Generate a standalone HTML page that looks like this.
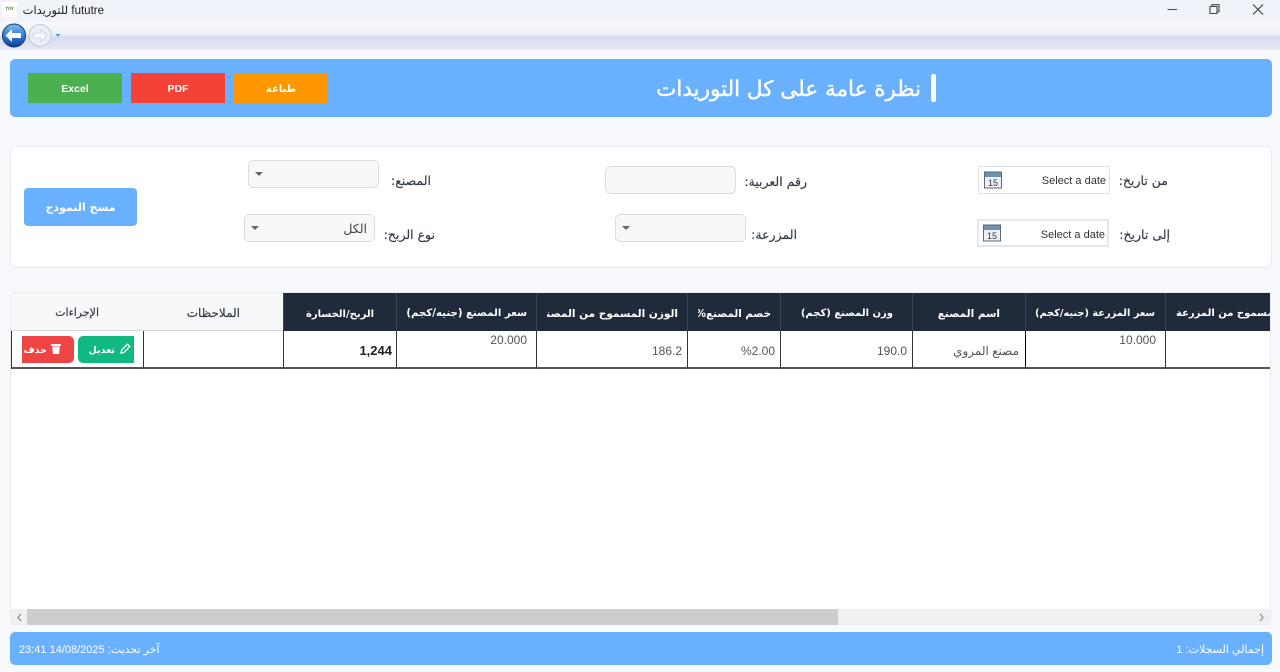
<!DOCTYPE html>
<html lang="ar">
<head>
<meta charset="utf-8">
<title>fututre للتوريدات</title>
<style>
*{box-sizing:border-box}
html,body{margin:0;padding:0;width:1280px;height:672px;overflow:hidden;background:#f7f9fc;font-family:"DejaVu Sans","Liberation Sans",sans-serif;color:#2b2f36}
.a{position:absolute}
.t{position:absolute;white-space:nowrap;direction:rtl;line-height:16px}
.lbl{font-size:12.5px;color:#333a44;height:16px;-webkit-text-stroke:.15px #333a44}
.btn{position:absolute;top:73px;width:94px;height:30px;color:#fff;font-weight:bold;font-size:10px;line-height:33px;text-align:center}
.sel{position:absolute;width:131px;height:28px;background:#f6f8fa;border:1px solid #d9dde2;border-radius:5px}
.sel:after{content:"";position:absolute;left:6px;top:11px;border-left:4px solid transparent;border-right:4px solid transparent;border-top:4px solid #666}
.date{position:absolute;width:132px;height:28px;background:#fff;border:1px solid #dde0e6;font:11px "Liberation Sans",sans-serif;color:#333;line-height:29px;text-align:right;padding-right:3px}
.date svg{position:absolute;left:5px;top:4px}
.h{position:absolute;top:293px;height:38px;background:#1f2a3b;border-left:1px solid #3a4557;overflow:hidden}
.h i{position:absolute;top:0;bottom:0;left:10px;right:9px;overflow:hidden;font-style:normal;display:block}
.h span{position:absolute;white-space:nowrap;direction:rtl;font-size:10.5px;line-height:14px;top:14px;color:#fff;font-weight:bold}
.hl{position:absolute;top:293px;height:38px;background:#f6f8fa;overflow:hidden;border-bottom:1px solid #d3d6da}
.hl span{position:absolute;white-space:nowrap;direction:rtl;line-height:14px;top:13px;color:#333a44;font-size:12px;-webkit-text-stroke:.15px #333a44}
.c{position:absolute;top:331px;height:38px;background:#fff;border-left:1px solid #333;border-bottom:2px solid #555;font-size:12px;color:#555;font-family:"Liberation Sans","DejaVu Sans",sans-serif}
.c span{position:absolute;white-space:nowrap;direction:rtl;line-height:14px}
</style>
</head>
<body>
<!-- title bar -->
<div class="a" style="left:0;top:0;width:1280px;height:22px;background:#f1f3fa"></div>
<div class="a" style="left:2px;top:2px;width:15px;height:15px;background:#fff;color:#5a8a3a;font:bold 5px 'Liberation Sans',sans-serif;line-height:15px;text-align:center">٢٥٧</div>
<div class="t" style="right:1176px;top:3px;font:11.5px 'Liberation Sans','DejaVu Sans',sans-serif;line-height:16px;color:#222">fututre للتوريدات</div>
<svg class="a" style="left:1160px;top:0" width="120" height="20" viewBox="0 0 120 20" fill="none" stroke="#444" stroke-width="1.1">
<path d="M7.5 9.5H17" stroke="#555"/>
<path d="M50 6.5h7v7h-7zM52 6.5V4.7h7v7h-2"/>
<path d="M93 4.5l10 10M103 4.5l-10 10" stroke-width="1.2"/>
</svg>
<!-- nav bar -->
<div class="a" style="left:0;top:22px;width:1280px;height:28px;background:linear-gradient(#f8f9fd 0,#eceef7 45%,#d8dbef 55%,#e6e8f5 100%)"></div>
<svg class="a" style="left:0;top:22px" width="66" height="28" viewBox="0 0 66 28">
<defs><linearGradient id="g" x1="0" y1="0" x2="0" y2="1"><stop offset="0" stop-color="#7cbcf2"/><stop offset=".55" stop-color="#2f78cf"/><stop offset="1" stop-color="#0e3f97"/></linearGradient></defs>
<circle cx="14" cy="13.5" r="11.5" fill="url(#g)" stroke="#123a7a"/>
<path d="M5.5 13.5l6.5-6.5v4h9v5h-9v4z" fill="#fff"/>
<circle cx="40" cy="13.5" r="11" fill="#eceef6" stroke="#c3c7da"/>
<path d="M47 13.5l-6-6v3.6h-8v5h8v3.6z" fill="#f8f8fc" stroke="#ccd0de" stroke-width=".8"/>
<path d="M55.5 12h5l-2.5 3z" fill="#4a9fc8"/>
</svg>
<!-- header -->
<div class="a" style="left:10px;top:59px;width:1262px;height:58px;background:#69b1ff;border-radius:5px"></div>
<div class="btn" style="left:28px;background:#4caf50;font-family:'Liberation Sans',sans-serif;font-size:10.5px">Excel</div>
<div class="btn" style="left:131px;background:#f44336;font-family:'Liberation Sans',sans-serif;font-size:10.5px">PDF</div>
<div class="btn" style="left:234px;background:#ff9800">طباعة</div>
<div class="t" style="right:359px;top:77px;font-size:21.5px;line-height:26px;color:#fff;-webkit-text-stroke:.4px #fff">نظرة عامة على كل التوريدات</div>
<div class="a" style="left:931px;top:74px;width:5px;height:28px;background:#fff;border-radius:2px"></div>
<!-- filter panel -->
<div class="a" style="left:10px;top:146px;width:1262px;height:122px;background:#fff;border:1px solid #e8ebf0;border-radius:6px"></div>
<div class="a" style="left:24px;top:188px;width:113px;height:38px;background:#69b1ff;border-radius:4px;color:#fff;font-size:11px;font-weight:bold;line-height:39px;text-align:center;direction:rtl">مسح النموذج</div>
<div class="sel" style="left:248px;top:160px"></div>
<div class="t lbl" style="right:849px;top:173px">المصنع:</div>
<div class="sel" style="left:244px;top:214px"><span style="position:absolute;right:7px;top:6px;font-size:12.5px;line-height:16px;color:#444;direction:rtl">الكل</span></div>
<div class="t lbl" style="right:845px;top:227px">نوع الربح:</div>
<div class="a" style="left:605px;top:166px;width:131px;height:28px;background:#f6f8fa;border:1px solid #d9dde2;border-radius:6px"></div>
<div class="t lbl" style="right:473px;top:174px">رقم العربية:</div>
<div class="sel" style="left:615px;top:214px"></div>
<div class="t lbl" style="right:483px;top:227px">المزرعة:</div>
<div class="date" style="left:978px;top:166px">Select a date<svg width="18" height="18" viewBox="0 0 18 18"><rect x=".5" y="1" width="17" height="16" fill="#eef1f4" stroke="#5b6a78"/><rect x="1" y="1.5" width="16" height="4.5" fill="#6f90ae"/><text x="9" y="15" font-family="Liberation Sans" font-size="9" fill="#334" text-anchor="middle">15</text></svg></div>
<div class="t lbl" style="right:112px;top:173px">من تاريخ:</div>
<div class="date" style="left:977px;top:219px;border:2px solid #e4e7ec;line-height:28px;padding-right:2px">Select a date<svg style="left:4px;top:3px" width="18" height="18" viewBox="0 0 18 18"><rect x=".5" y="1" width="17" height="16" fill="#eef1f4" stroke="#5b6a78"/><rect x="1" y="1.5" width="16" height="4.5" fill="#6f90ae"/><text x="9" y="15" font-family="Liberation Sans" font-size="9" fill="#334" text-anchor="middle">15</text></svg></div>
<div class="t lbl" style="right:110px;top:227px">إلى تاريخ:</div>
<!-- table container -->
<div class="a" style="left:10px;top:292px;width:1261px;height:333px;background:#fff;border:1px solid #e8ebf0;border-radius:4px"></div>
<!-- header row -->
<div class="hl" style="left:11px;width:132px"><span style="right:44px;font-size:11px">الإجراءات</span></div>
<div class="hl" style="left:143px;width:140px"><span style="right:43px">الملاحظات</span></div>
<div class="h" style="left:283px;width:113px"><span style="right:22px;font-size:10px;top:15px">الربح/الخسارة</span></div>
<div class="h" style="left:396px;width:140px"><span style="right:9px;font-size:10.2px">سعر المصنع (جنيه/كجم)</span></div>
<div class="h" style="left:536px;width:151px"><i><span style="right:0">الوزن المسموح من المصنع</span></i></div>
<div class="h" style="left:687px;width:93px"><i><span style="right:0;font-size:10.3px">خصم المصنع%</span></i></div>
<div class="h" style="left:780px;width:132px"><span style="right:19px;font-size:10px">وزن المصنع (كجم)</span></div>
<div class="h" style="left:912px;width:113px"><span style="right:25px">اسم المصنع</span></div>
<div class="h" style="left:1025px;width:140px"><span style="right:10px;font-size:9.8px">سعر المزرعة (جنيه/كجم)</span></div>
<div class="h" style="left:1165px;width:105px"><span style="left:10px;font-size:10px">الوزن المسموح من المزرعة</span></div>
<!-- data row -->
<div class="c" style="left:11px;width:132px"></div>
<div class="c" style="left:143px;width:140px"></div>
<div class="c" style="left:283px;width:113px;color:#222;font-weight:bold;font-size:13px"><span style="right:4px;top:13px">1,244</span></div>
<div class="c" style="left:396px;width:140px"><span style="right:9px;top:2px">20.000</span></div>
<div class="c" style="left:536px;width:151px"><span style="right:5px;top:13px">186.2</span></div>
<div class="c" style="left:687px;width:93px"><span style="right:5px;top:13px;direction:ltr">%2.00</span></div>
<div class="c" style="left:780px;width:132px"><span style="right:5px;top:13px">190.0</span></div>
<div class="c" style="left:912px;width:113px"><span style="right:6px;top:13px">مصنع المروي</span></div>
<div class="c" style="left:1025px;width:140px;border-left-color:#000"><span style="right:9px;top:2px">10.000</span></div>
<div class="c" style="left:1165px;width:105px"></div>
<div class="a" style="left:11px;top:331px;width:1px;height:38px;background:#333"></div>
<!-- buttons -->
<div class="a" style="left:78px;top:336px;width:56px;height:27px;background:#10b981;border-radius:5px 0 0 5px;color:#fff;font-size:9.5px;font-weight:bold;line-height:29px;direction:rtl;padding-right:19px;white-space:nowrap">تعديل</div>
<svg class="a" style="left:120px;top:343px" width="11" height="11" viewBox="0 0 11 11"><path d="M1 10l.6-3L7.5 1.2l2.3 2.3L4 9.4z" fill="none" stroke="#fff" stroke-width="1.3"/></svg>
<div class="a" style="left:22px;top:336px;width:52px;height:27px;background:#ef4444;border-radius:0 5px 5px 0;color:#fff;font-size:9.5px;font-weight:bold;line-height:29px;direction:rtl;padding-right:27px;white-space:nowrap">حذف</div>
<svg class="a" style="left:50px;top:343px" width="12" height="12" viewBox="0 0 12 12"><path d="M1 1h10v2H1zM2.2 3.5h7.6L9 11H3z" fill="#fff"/></svg>
<!-- scrollbar -->
<div class="a" style="left:11px;top:609px;width:1259px;height:16px;background:#f0f0f0"></div>
<div class="a" style="left:27px;top:609px;width:811px;height:16px;background:#cdcdcd"></div>
<svg class="a" style="left:11px;top:609px" width="1259" height="16" viewBox="0 0 1259 16" fill="none" stroke="#8a8a8a" stroke-width="1.2"><path d="M10 5L7 8.5 10 12M1249 5l3 3.5-3 3.5"/></svg>
<!-- footer -->
<div class="a" style="left:10px;top:632px;width:1262px;height:33px;background:#69b1ff;border-radius:5px"></div>
<div class="a" style="left:19px;top:642px;white-space:nowrap;color:#fff;font:11px/16px 'Liberation Sans','DejaVu Sans',sans-serif;direction:rtl">آخر تحديث: 14/08/2025 23:41</div>
<div class="t" style="right:16px;top:642px;color:#fff;font:11px/16px 'Liberation Sans','DejaVu Sans',sans-serif">إجمالي السجلات: 1</div>
</body>
</html>
